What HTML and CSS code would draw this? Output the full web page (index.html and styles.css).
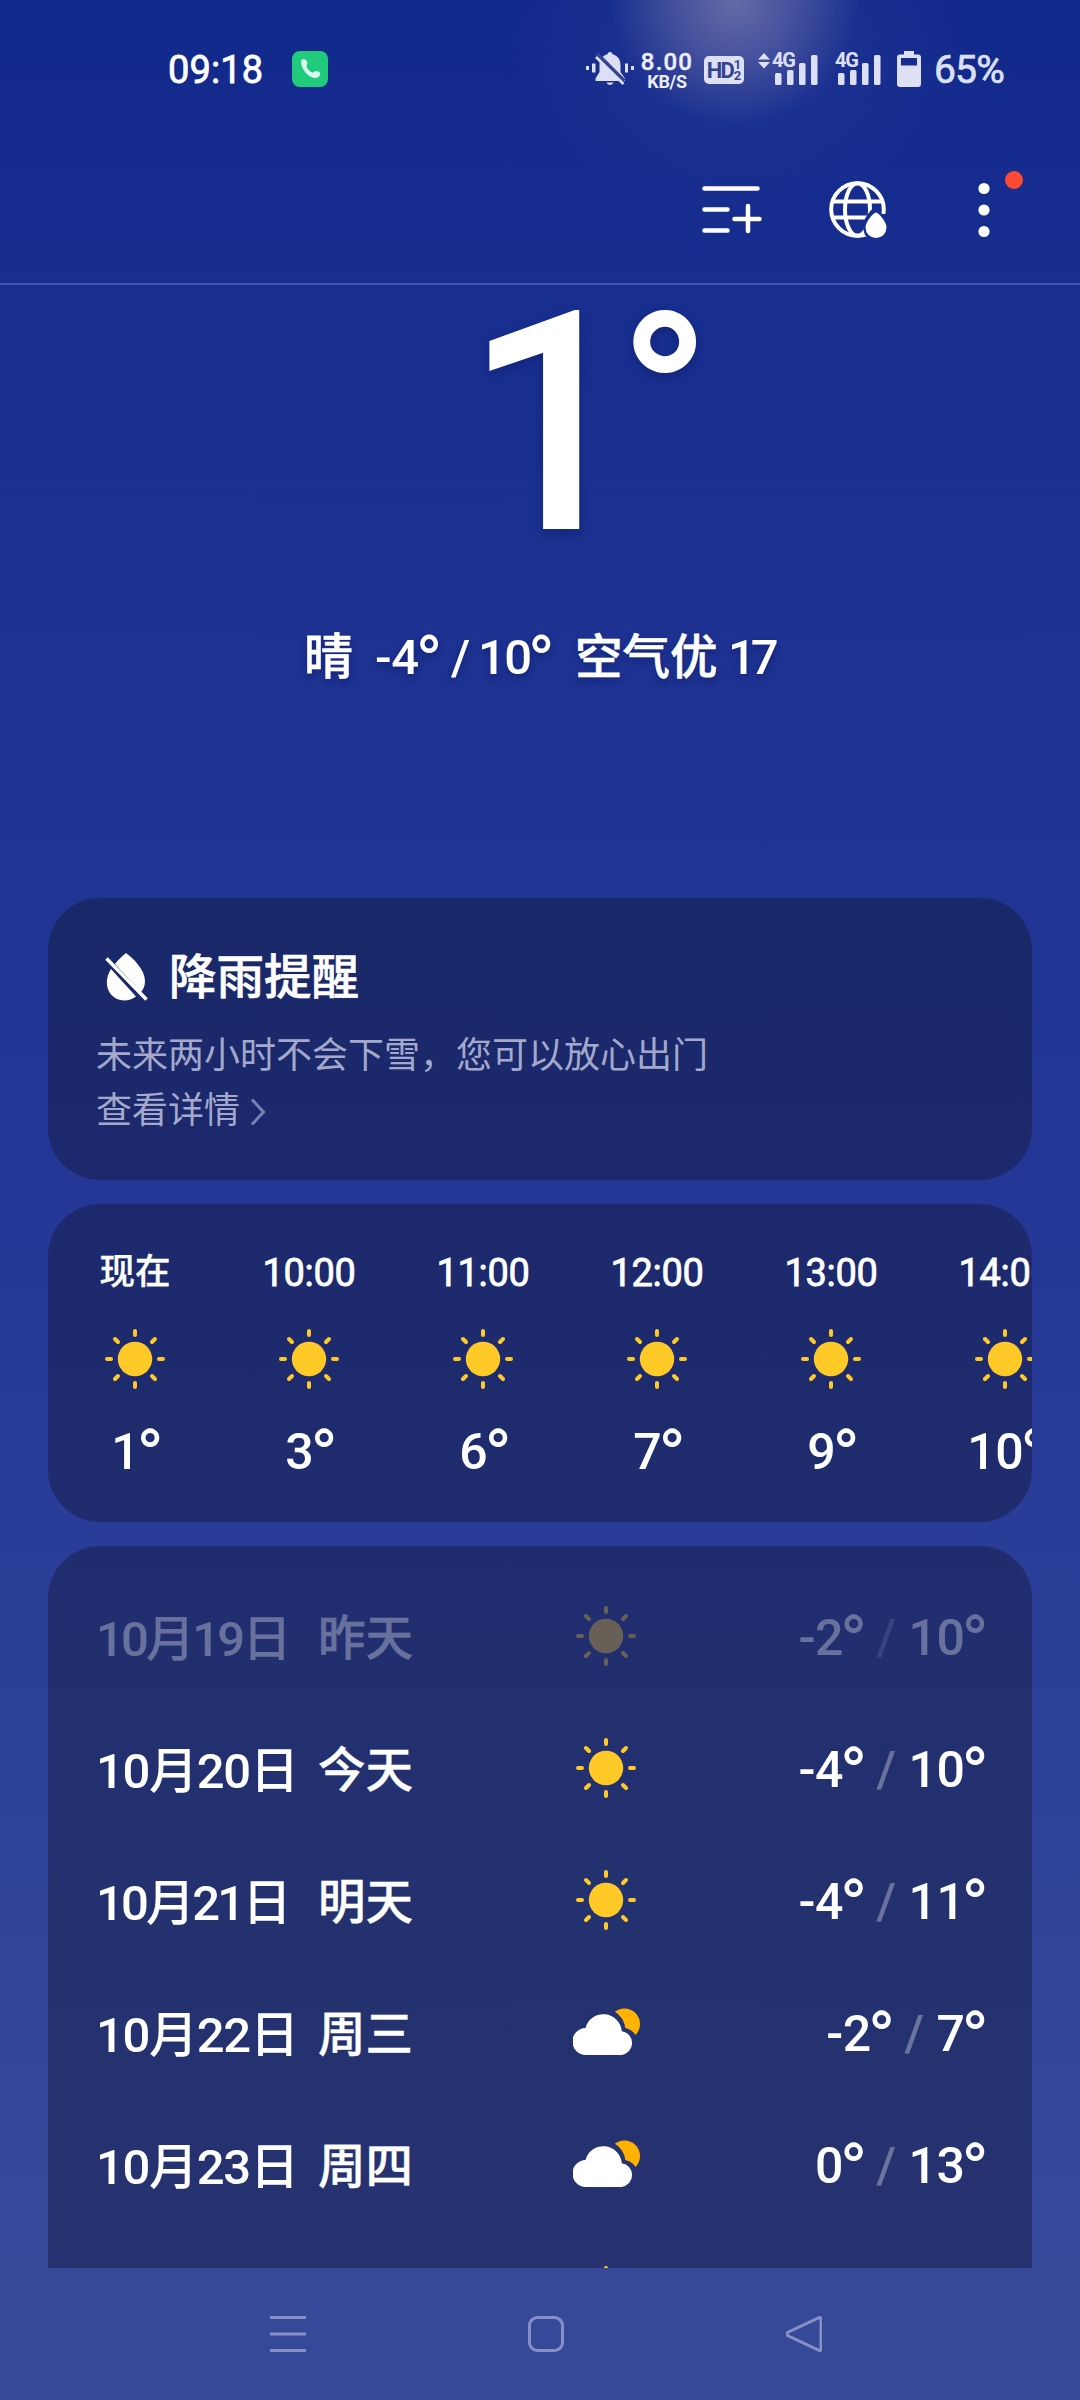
FILE: index.html
```html
<!DOCTYPE html>
<html lang="zh-CN">
<head>
<meta charset="utf-8">
<title>天气</title>
<link rel="stylesheet" href="styles.css">
</head>
<body>
<svg width="0" height="0" class="defs">
  <symbol id="sun" viewBox="-31 -31 62 62">
    <circle r="17.2" fill="currentColor"/>
    <g stroke="currentColor" stroke-width="4" stroke-linecap="round">
      <path d="M0-28V-24M0 28V24M-28 0H-24M28 0H24M-20-20L-17-17M20-20L17-17M-20 20L-17 17M20 20L17 17"/>
    </g>
  </symbol>
  <symbol id="cloud" viewBox="0 0 68 48">
    <circle cx="51.500" cy="17" r="15.500" fill="#ffb200"/>
    <path class="cloud-gap" d="M13 43a13 13 0 0 1-1.500-27.500A19 21 0 0 1 30 1.500A22 22 0 0 1 52.300 21A16 16 0 0 1 64.500 33L56 43Z"/>
    <path fill="#fff" d="M13.500 48A13.500 13.500 0 0 1 12.500 20.900A18.500 18.500 0 0 1 48.800 24.200A12 12 0 0 1 48.500 48Z"/>
  </symbol>
  <symbol id="signal" viewBox="0 0 43 30">
    <g fill="currentColor"><rect x="0" y="18" width="6.500" height="12" rx="1.500"/><rect x="12" y="15" width="6.500" height="15" rx="1.500"/><rect x="24" y="8" width="6.500" height="22" rx="1.500"/><rect x="36" y="0" width="6.500" height="30" rx="1.500"/></g>
  </symbol>
</svg>
<main class="screen">
  <header class="status">
    <span class="clock">09:18</span>
    <svg class="call" viewBox="0 0 36 36"><rect width="36" height="36" rx="8" fill="#20cc7c"/><path fill="#d9fff0" d="M9 10.500C9 8.500 11 7.600 12.500 8.200C15 9 16 11 15.200 13.200C14.800 14.300 14.200 14.800 14.500 15.600C15.800 18.700 18 20.800 20.400 21.600C21.300 21.800 21.800 20.800 22.600 20.500C24.700 19.600 28.300 20.400 28.300 22.500C28.200 25.500 25.500 27.400 22.500 27C15.500 26 9 17.500 9 10.500Z"/></svg>
    <div class="status-right">
      <svg class="mute" viewBox="0 0 48 34"><g fill="currentColor"><rect x="0" y="14" width="3" height="4"/><rect x="6" y="11.500" width="3.500" height="9"/><rect x="39" y="11.500" width="3" height="9"/><rect x="45" y="14" width="3" height="4"/><path d="M24 0a2.500 2.500 0 0 1 2.500 2.200C31.500 3.500 34.500 7.500 34.500 12.500V20L39 26.500V29H9.500V26.500L13.500 20V12.500C13.500 7.500 16.500 3.500 21.500 2.200A2.500 2.500 0 0 1 24 0ZM20.500 30.500H27.500a3.600 3.200 0 0 1-7 0Z"/></g><path d="M11 2L38 29" stroke="#33438f" stroke-width="4"/><path d="M10 5L37.500 32" stroke="currentColor" stroke-width="2.600"/></svg>
      <span class="speed"><b>8.00</b><i>KB/S</i></span>
      <span class="hd"><span>HD</span><span class="sims"><i>1</i><i>2</i></span></span>
      <span class="net net-live"><svg class="updown" viewBox="0 0 12 16"><path fill="currentColor" d="M6 0L12 6.500H0ZM0 9H12L6 15.500Z"/></svg><span class="net-label">4G</span><svg class="bars"><use href="#signal"/></svg></span>
      <span class="net"><span class="net-label">4G</span><svg class="bars"><use href="#signal"/></svg></span>
      <svg class="battery" viewBox="0 0 24 36"><path fill="currentColor" fill-rule="evenodd" d="M7 0H17V3.500H21a3 3 0 0 1 3 3V33a3 3 0 0 1-3 3H3a3 3 0 0 1-3-3V6.500a3 3 0 0 1 3-3H7ZM4 7V14.500H20V7Z"/></svg>
      <span class="percent">65%</span>
    </div>
  </header>
  <nav class="toolbar">
    <svg class="tool-list" viewBox="0 0 60 50"><g stroke="#fff" stroke-width="4.500" stroke-linecap="round"><path d="M2.500 4.500H55.500M2.500 25.500H25.500M2.500 46.500H25.500M32.500 35H57.500M46 22V47"/></g></svg>
    <svg class="tool-globe" viewBox="0 0 58 58"><g fill="none" stroke="#fff" stroke-width="4"><circle cx="28.500" cy="28.500" r="26.300"/><ellipse cx="28.500" cy="28.500" rx="12.500" ry="26.300"/><path d="M4 20.500H53M4 36.500H53"/></g><path fill="#172e90" d="M47 25C41 29 34 38 34 45C34 49 35 51 36 54L40 58H58V33H53Z"/><path fill="#fff" d="M47 31.500C49.500 31.500 57.500 41 57.500 46.500A10.500 10.500 0 0 1 36.500 46.500C36.500 41 44.500 31.500 47 31.500Z"/></svg>
    <span class="tool-more"><svg viewBox="0 0 12 56"><g fill="#fff"><circle cx="6" cy="6.500" r="5.600"/><circle cx="6" cy="28" r="5.600"/><circle cx="6" cy="49.500" r="5.600"/></g></svg><span class="badge"></span></span>
  </nav>
  <section class="hero">
    <div class="now">1<span class="now-deg">°</span></div>
    <div class="summary"><span class="sum-sky">晴</span><span class="sum-low">-4<span class="deg">°</span></span><span class="sum-slash">/</span><span class="sum-high">10<span class="deg">°</span></span><span class="sum-air">空气优</span><span class="sum-aqi">17</span></div>
  </section>
  <section class="card rain">
    <h2><svg viewBox="0 0 43 48"><path fill="#fff" d="M21 0C29 6 40 17 40 28C40 33 38.500 36 36 39L10 11C13 7 17 3 21 0ZM6 16L31 43.500C23 49.500 12 48.500 6 41.500C0 34 1 24 6 16Z"/><path d="M1.500 5.500L41.500 46.500" stroke="#fff" stroke-width="3.500"/></svg>降雨提醒</h2>
    <p>未来两小时不会下雪，您可以放心出门</p>
    <p>查看详情<svg class="chevron" viewBox="0 0 16 28"><path d="M2 1.500L13.500 14L2 26.500" fill="none" stroke="#7781b1" stroke-width="3"/></svg></p>
  </section>
  <section class="card hours">
    <div class="hour"><span class="time cn">现在</span><svg class="sun"><use href="#sun"/></svg><span class="temp">1<span class="deg">°</span></span></div>
    <div class="hour"><span class="time">10:00</span><svg class="sun"><use href="#sun"/></svg><span class="temp">3<span class="deg">°</span></span></div>
    <div class="hour"><span class="time">11:00</span><svg class="sun"><use href="#sun"/></svg><span class="temp">6<span class="deg">°</span></span></div>
    <div class="hour"><span class="time">12:00</span><svg class="sun"><use href="#sun"/></svg><span class="temp">7<span class="deg">°</span></span></div>
    <div class="hour"><span class="time">13:00</span><svg class="sun"><use href="#sun"/></svg><span class="temp">9<span class="deg">°</span></span></div>
    <div class="hour"><span class="time">14:00</span><svg class="sun"><use href="#sun"/></svg><span class="temp">10<span class="deg">°</span></span></div>
  </section>
  <section class="card days">
    <div class="day past"><span class="date narrow">10月19日</span><span class="name">昨天</span><span class="icon"><svg class="sun"><use href="#sun"/></svg></span><span class="range">-2<span class="deg">°</span><span class="sep">/</span>10<span class="deg">°</span></span></div>
    <div class="day"><span class="date">10月20日</span><span class="name">今天</span><span class="icon"><svg class="sun"><use href="#sun"/></svg></span><span class="range">-4<span class="deg">°</span><span class="sep">/</span>10<span class="deg">°</span></span></div>
    <div class="day"><span class="date narrow">10月21日</span><span class="name">明天</span><span class="icon"><svg class="sun"><use href="#sun"/></svg></span><span class="range">-4<span class="deg">°</span><span class="sep">/</span>11<span class="deg">°</span></span></div>
    <div class="day"><span class="date">10月22日</span><span class="name">周三</span><span class="icon"><svg class="cloud"><use href="#cloud"/></svg></span><span class="range">-2<span class="deg">°</span><span class="sep">/</span>7<span class="deg">°</span></span></div>
    <div class="day"><span class="date">10月23日</span><span class="name">周四</span><span class="icon"><svg class="cloud"><use href="#cloud"/></svg></span><span class="range">0<span class="deg">°</span><span class="sep">/</span>13<span class="deg">°</span></span></div>
    <div class="day"><span class="date"></span><span class="name"></span><span class="icon"><svg class="sun"><use href="#sun"/></svg></span><span class="range"></span></div>
  </section>
  <footer class="sysnav">
    <svg viewBox="0 0 36 36"><path d="M0 1.500H36M0 18H36M0 34.500H36"/></svg>
    <svg viewBox="0 0 36 36"><rect x="1.500" y="1.500" width="33" height="33" rx="8"/></svg>
    <svg viewBox="0 0 36 36"><path d="M32.500 1.800Q35 .5 35 3.500V32.500Q35 35.500 32.500 34.200L2.500 20Q-.5 18 2.500 16Z"/></svg>
  </footer>
</main>
</body>
</html>
```
FILE: styles.css
```css
* { box-sizing: border-box; }
body { margin: 0; }
svg { display: block; flex: none; }
i, b { font-style: normal; font-weight: inherit; }
.defs { position: absolute; }

.screen {
  width: 1080px;
  height: 2400px;
  overflow: hidden;
  display: flex;
  flex-direction: column;
  color: #fff;
  font-family: Roboto, "Noto Sans CJK SC", sans-serif;
  font-weight: 500;
  background:
    radial-gradient(ellipse 125px 125px at 735px 0, rgba(145, 140, 180, .62), rgba(130, 130, 175, .4) 45%, rgba(90, 95, 160, 0)),
    radial-gradient(ellipse 230px 190px at 738px 20px, rgba(90, 100, 170, .2), rgba(90, 100, 170, 0)),
    linear-gradient(#12298c 0, #182f90 300px, #1c3190 600px, #1f3493 900px, #253796 1200px, #293d98 1530px, #2f4299 1850px, #364999 2280px, #364999 2400px);
}

/* status bar */
.status {
  height: 138px;
  padding: 0 75px 0 168px;
  display: flex;
  align-items: center;
}
.clock { width: 124px; font-size: 38px; line-height: 38px; margin-top: 1px; font-weight: 400; letter-spacing: .1px; -webkit-text-stroke: .8px #fff; }
.call { width: 36px; height: 36px; }
.status-right { margin-left: auto; display: flex; align-items: center; color: #dde0f5; }
.mute { width: 48px; height: 34px; }
.speed { width: 54px; margin: 3px 0 0 6px; display: flex; flex-direction: column; align-items: center; font-weight: 700; color: #eceefb; }
.speed b { font-size: 24px; line-height: 21px; letter-spacing: 1.200px; font-weight: 500; -webkit-text-stroke: .4px; }
.speed i { font-size: 18px; line-height: 17px; letter-spacing: -.3px; }
.hd { width: 40px; height: 28px; margin-left: 10px; margin-top: 2px; border-radius: 5px; background: #dde0f5; color: #33448f; display: flex; align-items: center; justify-content: center; gap: 1px; font-size: 22px; font-weight: 700; letter-spacing: -2px; }
.sims { display: flex; flex-direction: column; font-size: 13px; line-height: 11px; letter-spacing: 0; }
.net { position: relative; width: 47px; height: 32px; margin-left: 16px; display: flex; justify-content: flex-end; align-items: flex-end; }
.net-live { width: 60px; margin-left: 14px; }
.bars { width: 43px; height: 30px; }
.net-label { position: absolute; right: 23px; top: -2px; font-size: 20px; line-height: 18px; letter-spacing: -1px; font-weight: 700; }
.updown { position: absolute; left: 0; top: 0; width: 12px; height: 16px; }
.battery { width: 24px; height: 36px; margin-left: 16px; }
.percent { margin-left: 13px; width: 71px; font-size: 39px; line-height: 39px; margin-top: 2px; font-weight: 400; letter-spacing: -.8px; -webkit-text-stroke: .7px; white-space: nowrap; }

/* toolbar */
.toolbar {
  height: 147px;
  padding: 43px 60px 0 702px;
  display: flex;
  align-items: flex-start;
  border-bottom: 2px solid #4157ab;
}
.tool-list { width: 60px; height: 50px; margin-top: 3px; }
.tool-globe { width: 58px; height: 58px; margin-left: 67px; }
.tool-more { position: relative; margin-left: 91px; width: 12px; margin-top: 1px; }
.tool-more svg { width: 12px; height: 56px; }
.badge { position: absolute; left: 27px; top: -11px; width: 18px; height: 18px; border-radius: 50%; background: #fb4b35; }

/* current weather */
.hero { height: 613px; flex: none; }
.now {
  height: 290px;
  padding-left: 464px;
  font-size: 307px;
  line-height: 278px;
  text-shadow: 0 4px 12px rgba(5, 15, 80, .35);
  white-space: nowrap;
}
.now-deg { font-size: 238px; font-weight: 700; line-height: 0; vertical-align: 48px; margin-left: -20px; }
.summary {
  height: 164px;
  padding-top: 35px;
  margin-top: 14px;
  display: flex;
  padding-left: 304px;
  font-size: 49px;
  line-height: 68px;
  white-space: nowrap;
  text-shadow: 0 3px 6px rgba(5, 15, 80, .4);
}
.deg { font-size: 1.480em; font-weight: 400; line-height: 0; vertical-align: -.18em; letter-spacing: 0; margin: 0 -5px 0 -3px; }
.sum-sky { width: 71px; -webkit-text-stroke: .6px; }
.sum-low { width: 76px; letter-spacing: -.5px; }
.sum-slash { width: 27px; }
.sum-high { width: 97px; letter-spacing: -1.500px; }
.sum-air { width: 153px; font-size: 47.500px; -webkit-text-stroke: .6px; }
.sum-aqi { letter-spacing: -5px; }

/* cards */
.card {
  margin: 0 48px 24px;
  border-radius: 52px;
  flex: none;
  overflow: hidden;
}
.rain { height: 282px; padding: 44px 48px 0; background: linear-gradient(#192869, #1c2a6d); }
.rain h2 { margin: 0 0 15px; height: 72px; display: flex; align-items: center; font-size: 47.500px; line-height: 72px; font-weight: 500; -webkit-text-stroke: .6px #fff; }
.rain h2 svg { width: 43px; height: 48px; margin: -2px 21px 0 9px; }
.rain p { margin: 0; height: 55px; display: flex; align-items: center; font-size: 36px; line-height: 55px; font-weight: 400; color: #a4a9cb; white-space: nowrap; }
.chevron { width: 16px; height: 28px; margin-left: 10px; }

.hours { height: 318px; padding-top: 42px; display: flex; background: linear-gradient(#1c2a6d, #1f2d6f); }
.hour { width: 174px; flex: none; display: flex; flex-direction: column; align-items: center; }
.time { height: 54px; font-size: 38px; line-height: 54px; font-weight: 400; -webkit-text-stroke: .8px #fff; letter-spacing: -.3px; }
.time.cn { font-size: 35.500px; line-height: 53px; font-weight: 500; letter-spacing: 0; -webkit-text-stroke: .3px; }
.sun { width: 62px; height: 62px; margin-top: 28px; color: #ffc928; }
.temp { margin-top: 28px; font-size: 50px; line-height: 68px; letter-spacing: -.5px; }

.days { height: 722px; margin-bottom: 0; padding: 26px 48px 0; border-radius: 52px 52px 0 0; background: linear-gradient(#1f2d6f, #23306f 25%, #263370); }
.day { height: 132px; display: flex; align-items: center; font-size: 50px; white-space: nowrap; }
.date { width: 222px; font-size: 49px; letter-spacing: -1.300px; margin-top: -7px; }
.date.narrow { letter-spacing: -2.800px; }
.name { width: 130px; font-size: 47.500px; margin-top: -7px; -webkit-text-stroke: .4px; }
.icon { width: 130px; margin-left: 84px; display: flex; justify-content: center; }
.day .sun { margin: -4px 0 0 18px; }
.cloud { width: 68px; height: 48px; margin: -6px 0 0 20px; }
.cloud-gap { fill: #253270; }
.range { margin-left: auto; letter-spacing: -.5px; }
.sep { margin: 0 13px 0 14px; opacity: .32; }
.past > * { opacity: .32; }

/* system navigation */
.sysnav { height: 132px; padding: 48px 258px 0 270px; display: flex; justify-content: space-between; align-items: flex-start; }
.sysnav svg { width: 36px; height: 36px; fill: none; stroke: #8590c5; stroke-width: 3; }
```
